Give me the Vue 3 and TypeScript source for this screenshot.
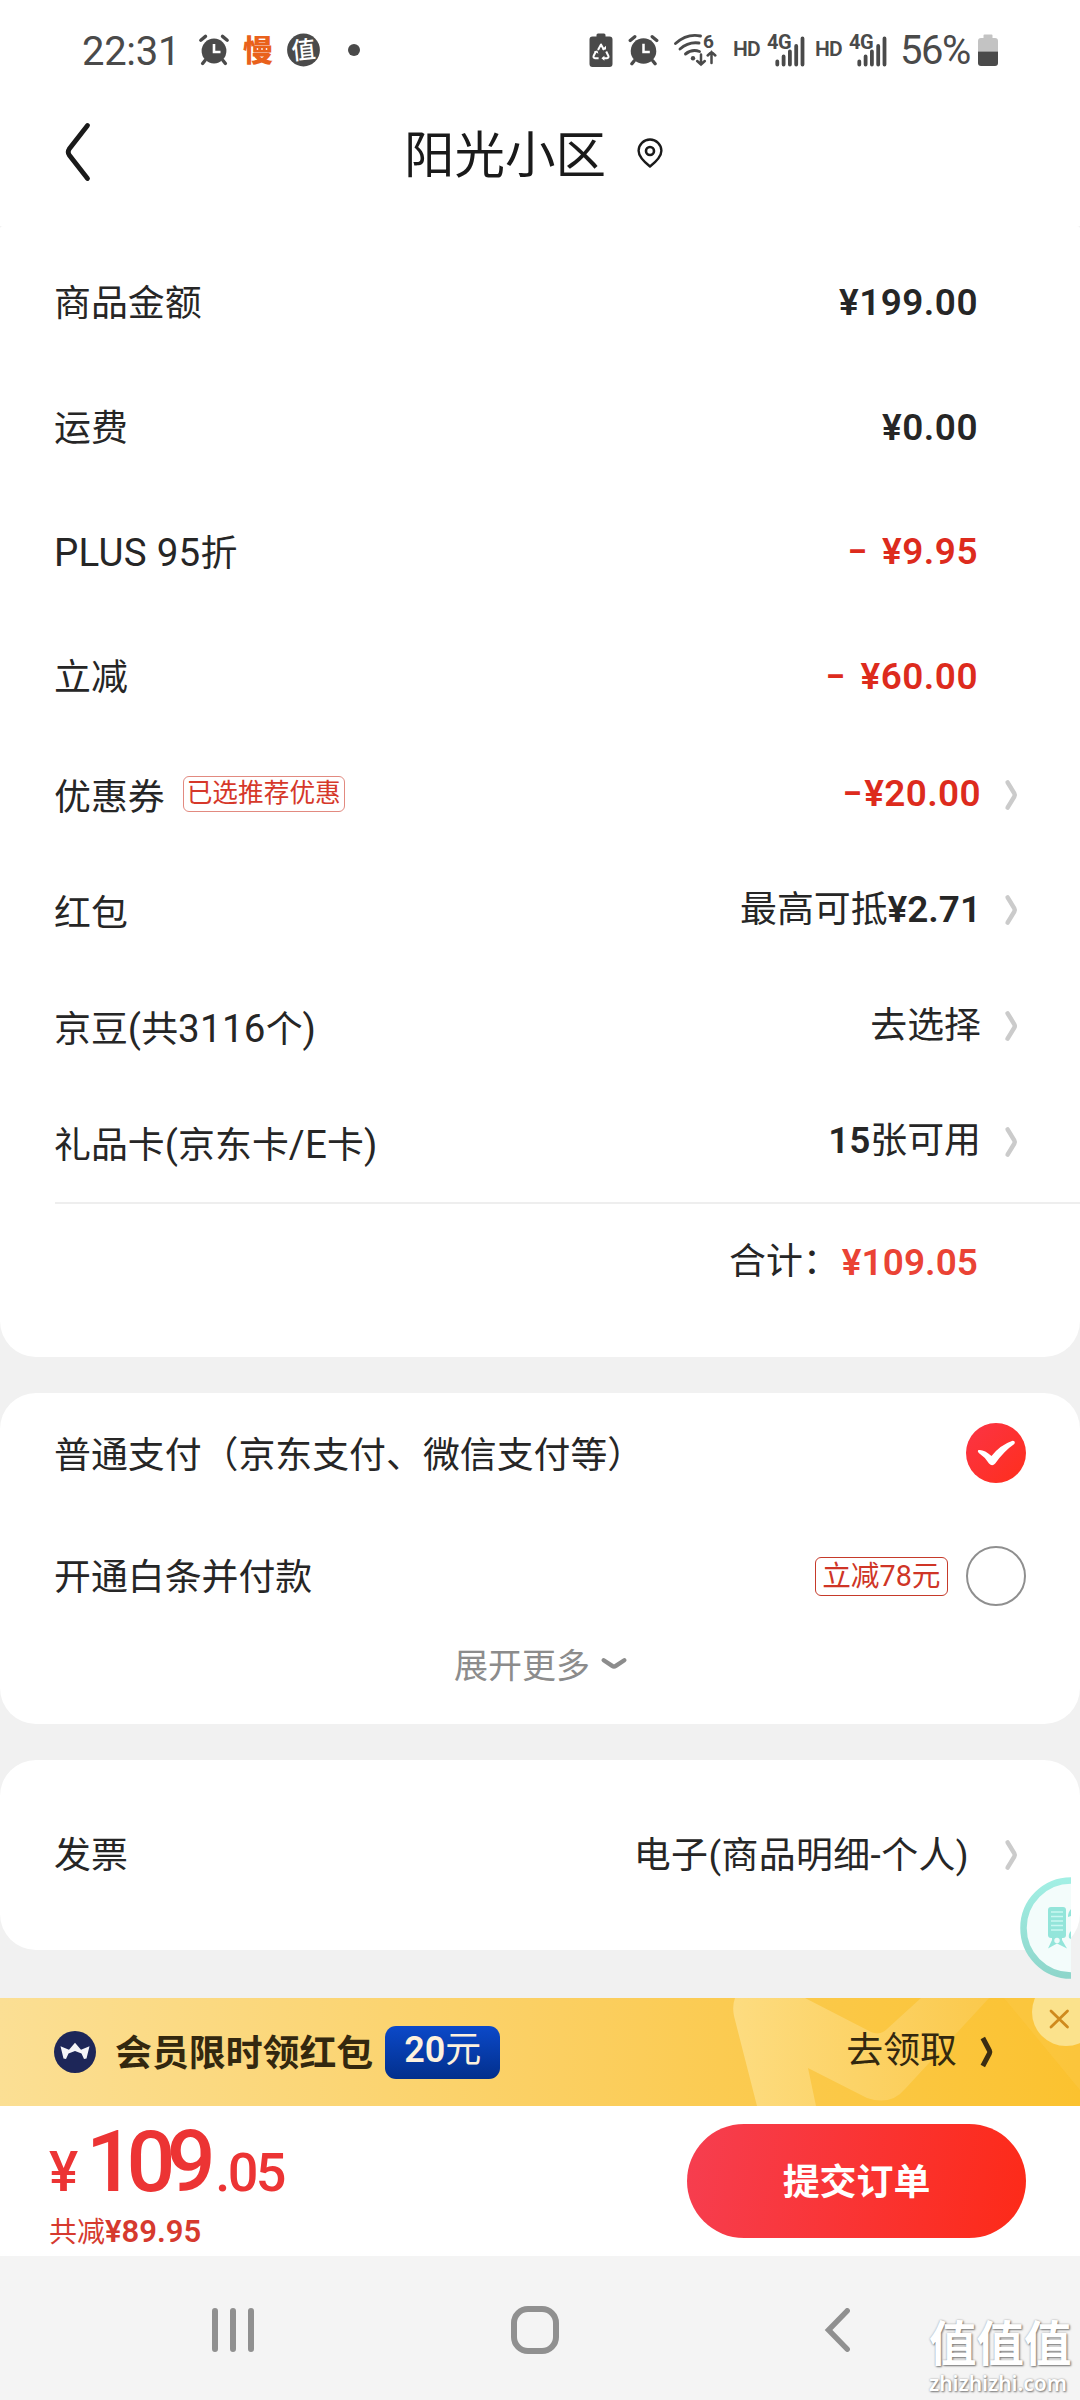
<script setup lang="ts">
interface AmountRow {
  label: string
  minus?: boolean
  amount: string
}

interface OptionRow {
  label: string
  tag?: string
  before?: string
  minus?: boolean
  strong?: string
  after?: string
}

const amounts: AmountRow[] = [
  { label: '商品金额', amount: '¥199.00' },
  { label: '运费', amount: '¥0.00' },
  { label: 'PLUS 95折', minus: true, amount: '¥9.95' },
  { label: '立减', minus: true, amount: '¥60.00' },
]

const options: OptionRow[] = [
  { label: '优惠券', tag: '已选推荐优惠', minus: true, strong: '¥20.00' },
  { label: '红包', before: '最高可抵', strong: '¥2.71' },
  { label: '京豆(共3116个)', before: '去选择' },
  { label: '礼品卡(京东卡/E卡)', strong: '15', after: '张可用' },
]

const sims = [1, 2]

// Splits a label into Latin and Chinese runs so that each gets its own size.
const runs = (text: string) =>
  text
    .split(/([\x20-\x7e]+)/)
    .filter(Boolean)
    .map((value) => ({ value, latin: /^[\x20-\x7e]/.test(value) }))
</script>

<template>
  <div class="screen">
    <div class="status">
      <span class="time">22:31</span>
      <svg width="32" height="32" viewBox="0 0 32 32">
        <circle cx="16" cy="17" r="12.4" fill="#4a4a4a" />
        <path d="M2.8 6.2 7.5 2.4M29.2 6.2 24.5 2.4M7 26.5 4.6 29.5M25 26.5 27.4 29.5" stroke="#4a4a4a" stroke-width="3.4" stroke-linecap="round" />
        <path d="M16 10v8h6.5" fill="none" stroke="#fff" stroke-width="2.6" />
      </svg>
      <span class="slow">慢</span>
      <svg class="zhi" width="33" height="34" viewBox="0 0 33 34">
        <circle cx="16.5" cy="17" r="16.4" fill="#4a4a4a" />
        <text x="16.5" y="25.500" text-anchor="middle" class="zhi-text" transform="rotate(-6 16.5 17)">值</text>
      </svg>
      <i class="dot"></i>

      <div class="status-right">
        <svg width="24" height="34" viewBox="0 0 24 34">
          <path d="M7.5 3.5V2q0-1.500 1.500-1.500h6q1.500 0 1.500 1.500v1.500H20.500q3 0 3 3V31q0 3-3 3H3.500q-3 0-3-3V6.500q0-3 3-3z" fill="#4a4a4a" />
          <path d="M9 17l3-5.500 3 5.500M6.800 18.500 4.600 23q-.6 2 1.400 2.200h3.600M17.200 18.500 19.400 23q.6 2-1.400 2.200h-3.600" fill="none" stroke="#fff" stroke-width="2" stroke-linejoin="round" />
          <path d="M13 16.500h4v-3.800zM5 18.200l3.400-.8 1 3.400zM15.400 22.700v5l-3-2.500z" fill="#fff" />
        </svg>
        <svg class="g15" width="31" height="32" viewBox="0 0 32 32">
          <circle cx="16" cy="17" r="13.2" fill="#4a4a4a" />
          <path d="M2.300 6.200 7 2.200M29.700 6.200 25 2.200M6.500 27 4 30.200M25.500 27 28 30.200" stroke="#4a4a4a" stroke-width="3.400" stroke-linecap="round" />
          <path d="M16 9.500v8.500h6.500" fill="none" stroke="#fff" stroke-width="2.600" />
        </svg>
        <svg class="g14" width="44" height="42" viewBox="0 -4 44 42">
          <g fill="none" stroke="#4a4a4a" stroke-width="2.900" stroke-linecap="round">
            <path d="M2.500 10.500Q14 .2 27.500 3" />
            <path d="M7 16Q15.500 8.500 26 10" />
            <path d="M12.500 21Q19 15.800 26.500 18.500" />
            <path d="M28 21.500v10M24.200 28l3.800 3.600 3.800-3.600M38.500 30V19M34.700 22.500l3.800-3.600 3.800 3.600" stroke-width="2.500" />
          </g>
          <circle cx="20" cy="25.200" r="2.200" fill="#4a4a4a" />
          <text x="30" y="15" class="tiny">6</text>
        </svg>
        <template v-for="sim in sims" :key="sim">
          <span class="hd" :class="{ second: sim === 2 }">HD</span>
          <svg class="g6" width="38" height="42" viewBox="0 -4 38 42">
            <path d="M10.300 28.500v3M16.600 23.500v8M22.900 18.500v13M29.200 13v18.500M35.500 5.500v26" stroke="#4a4a4a" stroke-width="3.800" stroke-linecap="round" />
            <text x="0" y="15.800" class="tiny four">4G</text>
          </svg>
        </template>
        <span class="percent">56%</span>
        <svg class="battery" width="20" height="32" viewBox="0 0 20 32">
          <path d="M5.500 4V1.500Q5.500.5 6.500.5h7q1 0 1 1V4H17q3 0 3 3v10.500H0V7q0-3 3-3z" fill="#c3c3c3" />
          <path d="M0 17.500h20V29q0 3-3 3H3q-3 0-3-3z" fill="#4a4a4a" />
        </svg>
      </div>
    </div>

    <header class="header">
      <svg class="back" width="28" height="62" viewBox="0 0 28 62">
        <path d="M23.500 4.500 5.200 28q-2 3 0 6L23.500 57.500" fill="none" stroke="#1a1a1a" stroke-width="4.800" stroke-linecap="round" />
      </svg>
      <h1>阳光小区</h1>
      <svg class="pin" width="28" height="32" viewBox="0 0 28 32">
        <path d="M14 29.500C9 25.500 2.600 20 2.600 13.700a11.400 11.200 0 0 1 22.800 0C25.400 20 19 25.500 14 29.500z" fill="none" stroke="#1a1a1a" stroke-width="2.400" stroke-linejoin="round" />
        <circle cx="14" cy="14" r="4" fill="none" stroke="#1a1a1a" stroke-width="2.600" />
      </svg>
    </header>

    <section class="card bill">
      <div v-for="row in amounts" :key="row.label" class="row">
        <span class="label"><span v-for="run in runs(row.label)" :key="run.value" :class="{ latin: run.latin }">{{ run.value }}</span></span>
        <span class="money" :class="{ red: row.minus }"><i v-if="row.minus" class="minus spaced">-</i>{{ row.amount }}</span>
      </div>
      <div v-for="row in options" :key="row.label" class="row option">
        <span class="label"><span v-for="run in runs(row.label)" :key="run.value" :class="{ latin: run.latin }">{{ run.value }}</span></span>
        <span v-if="row.tag" class="picked">{{ row.tag }}</span>
        <span class="choice" :class="{ red: row.minus }">{{ row.before }}<b v-if="row.strong"><i v-if="row.minus" class="minus">-</i>{{ row.strong }}</b>{{ row.after }}</span>
        <svg class="arrow" width="15" height="34" viewBox="0 0 15 34">
          <path d="M3.600 4.300 10.300 15.300q1 1.700 0 3.400L3.600 29.700" fill="none" stroke="#cbcbcb" stroke-width="4.500" stroke-linecap="round" />
        </svg>
      </div>
      <div class="line"></div>
      <div class="total">
        <span>合计：</span>
        <span class="money sum">¥109.05</span>
      </div>
    </section>

    <section class="card pay">
      <div class="pay-row">
        <span class="label">普通支付（京东支付、微信支付等）</span>
        <svg class="checked" width="60" height="60" viewBox="0 0 60 60">
          <defs>
            <linearGradient id="checkFill" x1="0" y1="0" x2="1" y2="1">
              <stop offset="0" stop-color="#fb3445" />
              <stop offset="1" stop-color="#ff2e1c" />
            </linearGradient>
          </defs>
          <circle cx="30" cy="30" r="30" fill="url(#checkFill)" />
          <path d="M12.300 27Q18 26 25.500 33 34 22 46.500 17.700q3.500.2 1.800 3.300Q38 28 29.200 40.600q-3 3.400-6.200 0Q19 34 12.800 30q-1.700-1.300-.5-3z" fill="#fff" />
        </svg>
      </div>
      <div class="pay-row">
        <span class="label">开通白条并付款</span>
        <span class="cut">立减78元</span>
        <i class="radio"></i>
      </div>
      <div class="more">
        <span>展开更多</span>
        <svg width="26" height="14" viewBox="0 0 26 14">
          <path d="M2.700 3.200 11.200 8.900q1.800 1.200 3.600 0L23.300 3.200" fill="none" stroke="#8c8c8c" stroke-width="4.300" stroke-linecap="round" />
        </svg>
      </div>
    </section>

    <section class="card invoice">
      <span class="label">发票</span>
      <span class="kind">电子(商品明细-个人)</span>
      <svg class="arrow" width="15" height="34" viewBox="0 0 15 34">
        <path d="M3.600 4.300 10.300 15.300q1 1.700 0 3.400L3.600 29.700" fill="none" stroke="#cbcbcb" stroke-width="4.500" stroke-linecap="round" />
      </svg>
    </section>

    <svg class="float" width="51" height="102" viewBox="0 0 51 102">
      <defs>
        <linearGradient id="ring" x1="0" y1="0" x2="0" y2="1">
          <stop offset="0" stop-color="#a2efe4" />
          <stop offset="1" stop-color="#8ed6cb" />
        </linearGradient>
      </defs>
      <circle cx="51" cy="51" r="47.500" fill="#f3fcfb" stroke="url(#ring)" stroke-width="6.500" />
      <rect x="28" y="30" width="18" height="31" rx="3" fill="#93e5da" />
      <path d="M31 35h12M31 39.500h12M31 44h12M31 48.500h12M31 53h12" stroke="#c9f7f1" stroke-width="1.600" />
      <path d="M32 58h10v5l5 8.500-10-5-9 5 4-8.500z" fill="#93e5da" />
      <circle cx="37" cy="63.500" r="2.700" fill="#eefbf9" />
      <path d="M51 32q-3 3-3 8l3-1zM51 54q-3 3-2 7l2 1z" fill="#93e5da" />
    </svg>

    <div class="banner">
      <svg class="mark" width="480" height="108" viewBox="0 0 480 108">
        <defs>
          <linearGradient id="markFill" x1="0" y1="0" x2="1" y2="0">
            <stop offset="0" stop-color="#fddc80" />
            <stop offset="1" stop-color="#fbc94c" />
          </linearGradient>
        </defs>
        <path d="M135 0H205L271 34q9 4 16-3L321 0H389L305 91q-14 17-38 9L208 70 216 108H157L134 18q-2-10 1-18z" fill="url(#markFill)" />
        <path d="M404 0H480V92z" fill="#fcc946" opacity=".55" />
        <circle cx="466" cy="14" r="34" fill="#fbe28c" />
        <path d="M451 13l16.500 16M467.500 13 451 29" stroke="#cf8a1d" stroke-width="2.800" stroke-linecap="round" />
      </svg>
      <svg class="crown" width="42" height="42" viewBox="0 0 42 42">
        <circle cx="21" cy="21" r="21" fill="#1d2658" />
        <path d="M6.500 15.200 15 18.800 21 11.800 27 18.800 35.500 15.200 32.500 27.500 30 28 27.500 22.500 21 20 14.500 22.500 12 28 9.500 27.500z" fill="#f4f4f8" />
      </svg>
      <span class="promo">会员限时领红包</span>
      <span class="coupon"><b>20</b>元</span>
      <span class="claim">去领取</span>
      <svg class="claim-arrow" width="15" height="34" viewBox="0 0 15 34">
        <path d="M2.800 3 9.400 15.500q.8 1.500 0 3L2.800 31" fill="none" stroke="#3b2d12" stroke-width="5" />
      </svg>
    </div>

    <footer class="checkout">
      <div class="payable">
        <div class="price"><span class="yen">¥</span><span class="whole">109</span><span class="cents">.05</span></div>
        <div class="saved">共减<b>¥89.95</b></div>
      </div>
      <button class="submit">提交订单</button>
    </footer>

    <nav class="nav">
      <svg class="recents" width="42" height="44" viewBox="0 0 42 44">
        <path d="M3 3v38M21 3v38M39 3v38" stroke="#909090" stroke-width="6" stroke-linecap="round" />
      </svg>
      <svg class="home" width="48" height="48" viewBox="0 0 48 48">
        <rect x="3" y="3" width="42" height="42" rx="14" fill="none" stroke="#909090" stroke-width="6" />
      </svg>
      <svg class="nav-back" width="26" height="44" viewBox="0 0 26 44">
        <path d="M23.200 2.800 4.500 22 23.200 41.200" fill="none" stroke="#909090" stroke-width="5.400" stroke-linecap="round" stroke-linejoin="miter" />
      </svg>
    </nav>
    <div class="watermark">
      <strong>值值值</strong>
      <span>zhizhizhi.com</span>
    </div>
  </div>
</template>

<style>
body {
  background: #f1f1f1;
}
</style>

<style scoped>
.screen {
  position: relative;
  display: flex;
  flex-direction: column;
  width: 1080px;
  height: 2400px;
  overflow: hidden;
  background: #f1f1f1;
  color: #262626;
  font-family: Roboto, "Noto Sans CJK SC", sans-serif;
  font-size: 36.900px;
  line-height: 1.2;
  white-space: nowrap;
}
.screen svg {
  display: block;
  flex: none;
}
.screen i {
  font-style: normal;
}
.status {
  display: flex;
  align-items: center;
  height: 100px;
  padding: 0 82px;
  background: #fff;
  color: #4a4a4a;
}
.time {
  width: 116px;
  padding-top: 4px;
  font-size: 40px;
  letter-spacing: -0.300px;
}
.slow {
  width: 32px;
  margin-left: 12px;
  padding-top: 2px;
  color: #e9611b;
  font-size: 30px;
  font-weight: 900;
  text-align: center;
}
.zhi {
  margin-left: 13px;
}
.zhi-text {
  fill: #fff;
  font-size: 24px;
  font-weight: 500;
}
.dot {
  width: 12px;
  height: 12px;
  margin-left: 28px;
  border-radius: 50%;
  background: #4a4a4a;
}
.status-right {
  display: flex;
  align-items: center;
  margin-left: auto;
}
.g15 {
  margin-left: 15px;
}
.g14 {
  margin-left: 14px;
}
.g6 {
  margin-left: 6px;
}
.tiny {
  fill: #4a4a4a;
  font-size: 19px;
  font-weight: 700;
}
.four {
  font-size: 20px;
  letter-spacing: -0.500px;
}
.hd {
  width: 28px;
  margin-left: 16px;
  font-size: 21px;
  font-weight: 600;
  letter-spacing: -0.800px;
}
.hd.second {
  margin-left: 10px;
}
.percent {
  width: 71px;
  margin-left: 13px;
  padding-top: 1px;
  font-size: 40px;
  letter-spacing: -1.500px;
}
.battery {
  margin-left: 7px;
}
.header {
  display: flex;
  align-items: center;
  height: 126px;
  background: #fff;
}
.back {
  margin: -22px 0 0 64px;
}
h1 {
  margin: -13px 0 0 312px;
  color: #1a1a1a;
  font-size: 50.500px;
  font-weight: 400;
}
.pin {
  margin: -20px 0 0 30px;
}
.card {
  flex: none;
  box-sizing: border-box;
  border-radius: 36px;
  background: #fff;
}
.bill {
  height: 1131px;
  padding: 15px 0 0 54px;
  border-radius: 3px 3px 36px 36px;
}
.row {
  display: flex;
  align-items: center;
  height: 124.800px;
  padding-right: 102px;
}
.row.option {
  height: 115.700px;
  padding-right: 61px;
}
.row .label {
  padding-top: 1px;
}
.row.option .label {
  padding-top: 0;
}
.latin {
  font-size: 38.500px;
  letter-spacing: 0.250px;
}
.money {
  margin-left: auto;
  padding-bottom: 1px;
  font-weight: 600;
  letter-spacing: 0.500px;
}
.minus {
  display: inline-block;
  margin-right: 4px;
  transform: translateY(-2px) scaleX(1.500);
}
.minus.spaced {
  margin-right: 17px;
}
.red {
  color: #dd2b1d;
}
.picked {
  height: 34px;
  margin: -8px 0 0 18px;
  padding: 0 3px;
  border: 1px solid #e28a80;
  border-radius: 6px;
  color: #d6382a;
  font-size: 25.700px;
  line-height: 32px;
}
.choice {
  margin-left: auto;
  padding-bottom: 7px;
}
.choice b {
  font-weight: 600;
}
.choice.red b {
  letter-spacing: 0.400px;
}
.arrow {
  margin: -7px 0 0 23px;
}
.line {
  height: 2px;
  margin: -1px 0 0 1px;
  background: #eeeeee;
}
.total {
  display: flex;
  align-items: center;
  height: 117px;
  padding-right: 102px;
}
.total > span:first-child {
  margin-left: auto;
}
.money.sum {
  margin-left: 2px;
  padding: 1px 0 0;
  color: #ea4335;
  letter-spacing: 0.100px;
}
.pay {
  height: 331px;
  margin-top: 36px;
}
.pay-row {
  display: flex;
  align-items: center;
  height: 122px;
  padding: 0 54px;
}
.pay-row .label {
  margin-right: auto;
  padding-top: 5px;
}
.checked {
  margin-top: -2px;
}
.cut {
  height: 37px;
  padding: 0 6.500px;
  border: 1px solid #c63a2a;
  border-radius: 6px;
  color: #cf3526;
  font-size: 28.700px;
  line-height: 37px;
}
.radio {
  box-sizing: border-box;
  width: 60px;
  height: 60px;
  margin-left: 18px;
  border: 2px solid #8f8f8f;
  border-radius: 50%;
}
.more {
  display: flex;
  align-items: center;
  gap: 11px;
  height: 58px;
  padding-left: 454px;
  color: #8c8c8c;
  font-size: 34px;
}
.more svg {
  margin-top: -5px;
}
.invoice {
  display: flex;
  align-items: center;
  height: 190px;
  margin-top: 36px;
  padding: 0 61px 0 54px;
}
.invoice span {
  padding-top: 2px;
}
.kind {
  margin-left: auto;
  letter-spacing: 0.400px;
}
.invoice .arrow {
  margin: 0 0 0 35px;
}
.float {
  position: absolute;
  top: 1877px;
  left: 1020px;
}
.banner {
  position: relative;
  display: flex;
  flex: none;
  align-items: center;
  height: 108px;
  margin-top: 48px;
  padding-left: 54px;
  background: linear-gradient(90deg, #fbdf94, #fbcf61 52%, #fbc22f);
  color: #33280f;
}
.mark {
  position: absolute;
  top: 0;
  right: 0;
}
.promo {
  margin-left: 19px;
  padding-top: 4px;
  font-weight: 700;
}
.coupon {
  box-sizing: border-box;
  width: 115px;
  height: 53px;
  margin-left: 12px;
  border-radius: 11px;
  background: linear-gradient(180deg, #0b49c9, #022f8c);
  color: #fdf1dd;
  font-size: 36px;
  line-height: 49px;
  text-align: center;
}
.coupon b {
  font-weight: 600;
}
.claim {
  position: relative;
  margin-left: auto;
  padding-bottom: 2px;
}
.claim-arrow {
  position: relative;
  margin: 0 85px 0 23px;
}
.checkout {
  display: flex;
  flex: none;
  justify-content: space-between;
  box-sizing: border-box;
  height: 150px;
  padding: 18px 54px 0 49px;
  background: #fff;
}
.price {
  display: flex;
  align-items: baseline;
  height: 86px;
  color: #ec3434;
  font-weight: 500;
  line-height: 76px;
}
.yen {
  width: 37px;
  font-size: 55px;
}
.whole {
  font-size: 86px;
  letter-spacing: -8.500px;
}
.cents {
  margin-left: 8px;
  font-size: 54px;
  letter-spacing: -2.500px;
}
.saved {
  margin-top: 3px;
  color: #d63a2e;
  font-size: 28px;
}
.saved b {
  font-size: 31px;
  font-weight: 600;
}
.submit {
  width: 339px;
  height: 114px;
  padding: 0 0 4px;
  border: 0;
  border-radius: 57px;
  background: linear-gradient(100deg, #f63e50, #fd2a18);
  color: #fff;
  font-family: inherit;
  font-size: 36.900px;
  font-weight: 700;
}
.nav {
  display: flex;
  flex: none;
  align-items: center;
  height: 144px;
  background: #f4f4f4;
}
.recents {
  margin: 4px 0 0 212px;
}
.home {
  margin: 4px 0 0 257px;
}
.nav-back {
  margin: 4px 0 0 265px;
}
.watermark {
  position: absolute;
  top: 2317px;
  left: 929px;
  display: flex;
  flex-direction: column;
  width: 146px;
  color: #fff;
  text-shadow: 1px 1px 2px #777, 0 0 2px #a5a5a5;
}
.watermark strong {
  font-size: 47.500px;
  font-weight: 700;
  line-height: 56px;
}
.watermark span {
  font-family: "Noto Sans", sans-serif;
  font-size: 21px;
  font-weight: 600;
  line-height: 20px;
}
</style>
